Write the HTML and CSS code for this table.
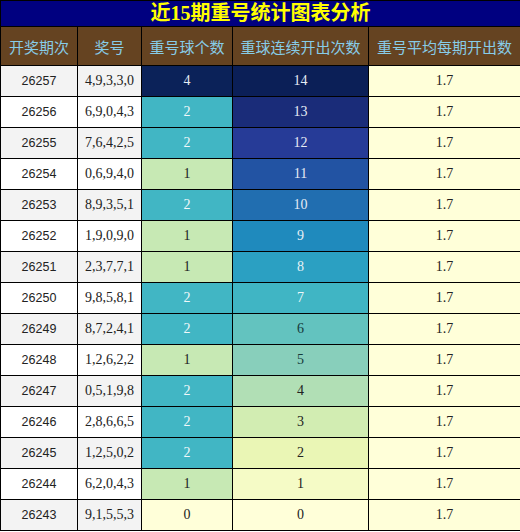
FILE: index.html
```html
<!DOCTYPE html>
<html lang="zh">
<head>
  <meta charset="UTF-8" />
  <title>近15期重号统计图表分析</title>
  <link rel="stylesheet" href="styles.css">
</head>
<body>
  <table class="stats">
    <colgroup>
      <col class="w1"><col class="w2"><col class="w3"><col class="w4"><col class="w5">
    </colgroup>
    <tr class="title-row"><th colspan="5">近15期重号统计图表分析</th></tr>
    <tr class="head-row">
      <th>开奖期次</th><th>奖号</th><th>重号球个数</th><th>重球连续开出次数</th><th>重号平均每期开出数</th>
    </tr>
    <tr class="odd"><td class="issue">26257</td><td>4,9,3,3,0</td><td class="n4">4</td><td class="c14">14</td><td class="avg">1.7</td></tr>
    <tr><td class="issue">26256</td><td>6,9,0,4,3</td><td class="n2">2</td><td class="c13">13</td><td class="avg">1.7</td></tr>
    <tr class="odd"><td class="issue">26255</td><td>7,6,4,2,5</td><td class="n2">2</td><td class="c12">12</td><td class="avg">1.7</td></tr>
    <tr><td class="issue">26254</td><td>0,6,9,4,0</td><td class="n1">1</td><td class="c11">11</td><td class="avg">1.7</td></tr>
    <tr class="odd"><td class="issue">26253</td><td>8,9,3,5,1</td><td class="n2">2</td><td class="c10">10</td><td class="avg">1.7</td></tr>
    <tr><td class="issue">26252</td><td>1,9,0,9,0</td><td class="n1">1</td><td class="c9">9</td><td class="avg">1.7</td></tr>
    <tr class="odd"><td class="issue">26251</td><td>2,3,7,7,1</td><td class="n1">1</td><td class="c8">8</td><td class="avg">1.7</td></tr>
    <tr><td class="issue">26250</td><td>9,8,5,8,1</td><td class="n2">2</td><td class="c7">7</td><td class="avg">1.7</td></tr>
    <tr class="odd"><td class="issue">26249</td><td>8,7,2,4,1</td><td class="n2">2</td><td class="c6">6</td><td class="avg">1.7</td></tr>
    <tr><td class="issue">26248</td><td>1,2,6,2,2</td><td class="n1">1</td><td class="c5">5</td><td class="avg">1.7</td></tr>
    <tr class="odd"><td class="issue">26247</td><td>0,5,1,9,8</td><td class="n2">2</td><td class="c4">4</td><td class="avg">1.7</td></tr>
    <tr><td class="issue">26246</td><td>2,8,6,6,5</td><td class="n2">2</td><td class="c3">3</td><td class="avg">1.7</td></tr>
    <tr class="odd"><td class="issue">26245</td><td>1,2,5,0,2</td><td class="n2">2</td><td class="c2">2</td><td class="avg">1.7</td></tr>
    <tr><td class="issue">26244</td><td>6,2,0,4,3</td><td class="n1">1</td><td class="c1">1</td><td class="avg">1.7</td></tr>
    <tr class="odd"><td class="issue">26243</td><td>9,1,5,5,3</td><td class="n0">0</td><td class="c0">0</td><td class="avg">1.7</td></tr>
  </table>
</body>
</html>
```

FILE: styles.css
```css
* {
  box-sizing: border-box;
}
body {
  margin: 0;
  background: #fff;
}
.stats {
  width: 520px;
  table-layout: fixed;
  border-collapse: collapse;
  border: 1px solid #000;
  font-family: "Liberation Serif", "Noto Sans CJK SC", serif;
  font-size: 14px;
  color: #222;
  text-align: center;
}
.w1 { width: 77px; }
.w2 { width: 64px; }
.w3 { width: 91px; }
.w4 { width: 136px; }
.w5 { width: 152px; }
.stats th,
.stats td {
  border: 1px solid #000;
  padding: 0;
}
.title-row th {
  height: 26px;
  background: #000080;
  color: #ffff00;
  font-size: 20px;
  font-weight: bold;
  line-height: 25px;
}
.head-row th {
  height: 39px;
  background: #654321;
  color: #87cce8;
  font-family: "Noto Sans CJK SC", sans-serif;
  font-size: 15px;
  font-weight: normal;
}
.stats td {
  height: 31px;
  background: #fff;
}
.odd td {
  background: #f3f3f3;
}
.stats td.issue {
  font-family: "Liberation Sans", sans-serif;
  font-size: 12.5px;
}
.stats td.avg { background: #ffffd9; }

/* 重号球个数 */
.stats td.n4 { background: #0b2259; color: #e6ecf5; }
.stats td.n2 { background: #41b6c4; color: #f2f8fa; }
.stats td.n1 { background: #c7e9b4; }
.stats td.n0 { background: #ffffd9; }

/* 连续开出次数 */
.stats td.c14 { background: #0b1f57; color: #e6ecf5; }
.stats td.c13 { background: #1a2c79; color: #e6ecf5; }
.stats td.c12 { background: #263b97; color: #e6ecf5; }
.stats td.c11 { background: #2253a3; color: #e6ecf5; }
.stats td.c10 { background: #216eb0; color: #e6ecf5; }
.stats td.c9 { background: #1f8abd; color: #e6f0f5; }
.stats td.c8 { background: #2ba0c2; color: #e6f2f5; }
.stats td.c7 { background: #40b5c4; color: #eef8fa; }
.stats td.c6 { background: #63c3bf; color: #153a3a; }
.stats td.c5 { background: #88cfbb; color: #153a3a; }
.stats td.c4 { background: #b1dfb5; }
.stats td.c3 { background: #d2edb2; }
.stats td.c2 { background: #eaf6b5; }
.stats td.c1 { background: #f5fbc6; }
.stats td.c0 { background: #ffffd9; }
```
